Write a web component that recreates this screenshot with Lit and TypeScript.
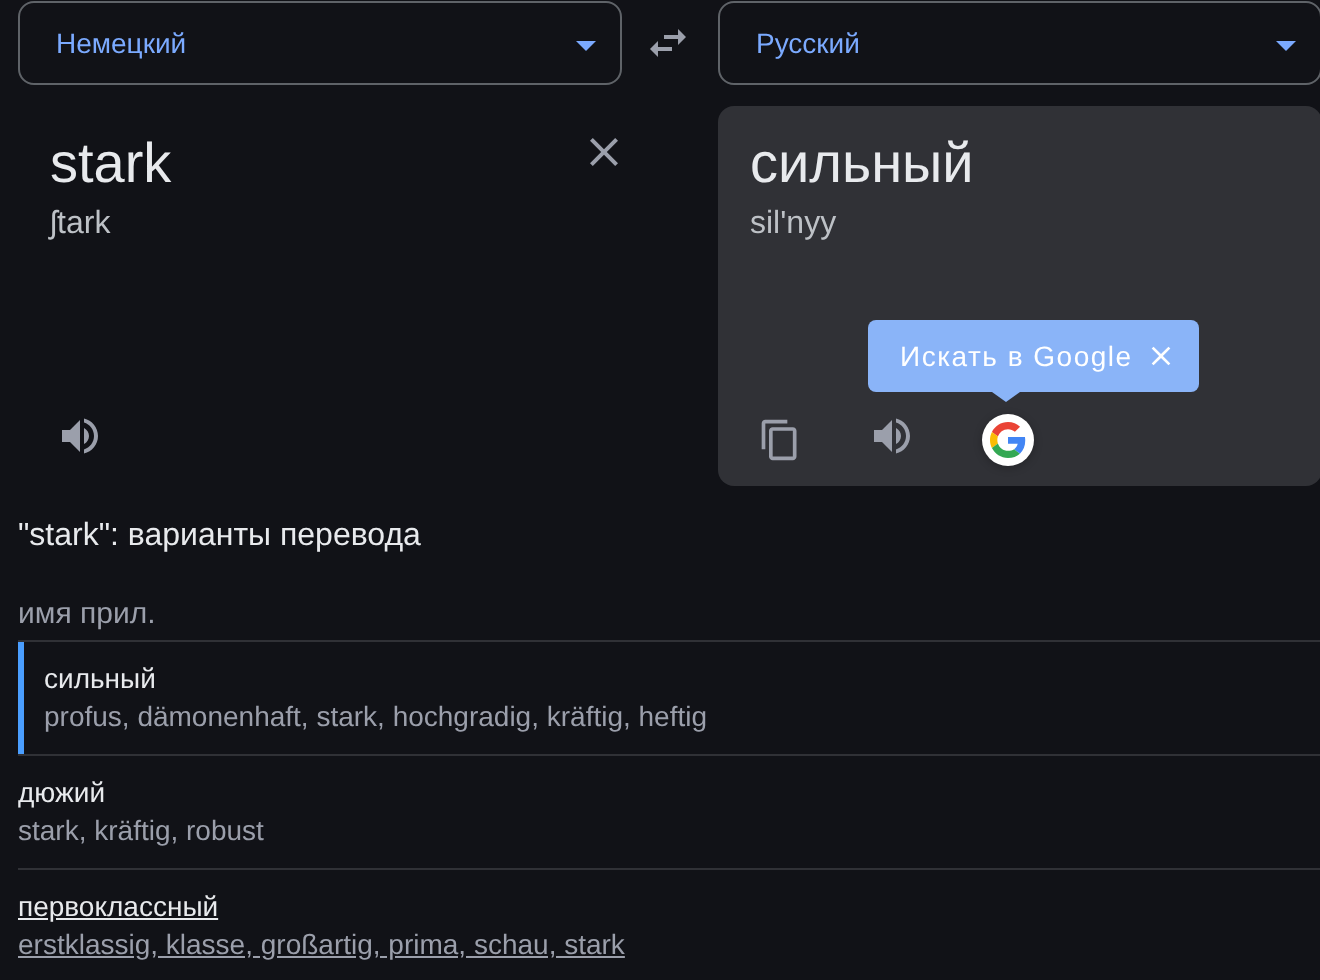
import { LitElement, html, css, svg } from "lit";
import { customElement } from "lit/decorators.js";

const ic = (d: string, cls: string) => html`<svg class=${cls} viewBox="0 0 24 24"><path d=${d}></path></svg>`;
const VOL = "M3 9v6h4l5 5V4L7 9H3zm13.5 3c0-1.77-1.02-3.29-2.5-4.03v8.05c1.48-.73 2.5-2.25 2.5-4.02zM14 3.23v2.06c2.89.86 5 3.54 5 6.71s-2.11 5.85-5 6.71v2.06c4.01-.91 7-4.49 7-8.77s-2.99-7.86-7-8.77z";
const CLOSE = "M19 6.41L17.59 5 12 10.59 6.41 5 5 6.41 10.59 12 5 17.59 6.41 19 12 13.41 17.59 19 19 17.59 13.41 12z";
const COPY = "M16 1H4c-1.1 0-2 .9-2 2v14h2V3h12V1zm3 4H8c-1.1 0-2 .9-2 2v14c0 1.1.9 2 2 2h11c1.1 0 2-.9 2-2V7c0-1.1-.9-2-2-2zm0 16H8V7h11v14z";
const SWAP = "M6.99 11L3 15l3.99 4v-3H14v-2H6.99v-3zM21 9l-3.99-4v3H10v2h7.01v3L21 9z";

@customElement("app-root")
export class AppRoot extends LitElement {
  static styles = css`
    :host { display: block; width: 1320px; height: 980px; overflow: hidden; background: #111217; font-family: "Liberation Sans", Arial, sans-serif; text-rendering: geometricPrecision; }
    .page { width: 1322px; padding: 1px 0 0 18px; box-sizing: border-box; will-change: transform; }
    .grid { display: grid; grid-template-columns: 604px 96px 604px; }
    .select { height: 84px; box-sizing: border-box; border: 2px solid #5f6368; border-radius: 16px; display: flex; align-items: center; justify-content: space-between; padding: 0 24px 0 36px; color: #7baaff; font-size: 28px; }
    .select span:first-child { padding-top: 2px; }
    .caret { width: 0; height: 0; border-left: 10px solid transparent; border-right: 10px solid transparent; border-top: 10px solid #7baaff; margin-top: 6px; }
    .swap { display: flex; align-items: center; justify-content: center; padding-right: 4px; }
    svg { display: block; fill: #9b9fab; flex: none; }
    .i48 { width: 48px; height: 48px; }
    .i44 { width: 44px; height: 44px; }
    .panels { margin-top: 21px; }
    .panel { height: 380px; box-sizing: border-box; position: relative; display: flex; flex-direction: column; justify-content: space-between; padding: 20px 0 20px 32px; border-radius: 16px; }
    .panel.right { grid-column: 3; background: #303136; }
    .top { display: flex; justify-content: space-between; align-items: flex-start; }
    .main { font-size: 56px; line-height: 72px; color: #e8eaed; padding-top: 1px; }
    .phon { font-size: 32px; line-height: 40px; margin-top: 3px; color: #bdc1c6; }
    .clear { margin: 2px -6px 0 0; }
    .tools { display: flex; align-items: flex-start; height: 55px; }
    .left-tools { margin-left: 6px; }
    .tools .vol { margin-top: 1px; }
    .copy { margin: 7px 0 0 8px; }
    .tools .vol2 { margin-left: 66px; }
    .g { width: 52px; height: 52px; margin: 3px 0 0 66px; border-radius: 50%; background: #fff; box-shadow: 0 2px 8px rgba(0,0,0,.25); display: flex; align-items: center; justify-content: center; }
    .g svg { width: 36px; height: 36px; }
    .tip { position: absolute; left: 150px; top: 214px; width: 331px; height: 72px; box-sizing: border-box; background: #8ab4f8; border-radius: 8px; display: flex; align-items: center; justify-content: space-between; padding: 0 22px 0 32px; color: #fff; font-size: 28px; letter-spacing: 1.5px; white-space: nowrap; }
    .tip span { padding-top: 2px; }
    .tip svg { fill: #fff; width: 32px; height: 32px; }
    .tip::after { content: ""; position: absolute; left: 124px; top: 72px; width: 0; height: 0; border-left: 14px solid transparent; border-right: 14px solid transparent; border-top: 10px solid #8ab4f8; }
    h2 { margin: 27px 0 0; font-weight: 400; font-size: 32px; line-height: 42px; color: #e8eaed; }
    .cat { margin-top: 39px; font-size: 30px; line-height: 40px; color: #9b9fab; padding-bottom: 6px; border-bottom: 2px solid #303136; }
    .row { height: 114px; box-sizing: border-box; padding-top: 18px; border-bottom: 2px solid #303136; font-size: 28px; line-height: 38px; }
    .row.sel { border-left: 6px solid #4a9eff; border-bottom-color: transparent; padding-left: 20px; position: relative; }
    .row.sel::after { content: ""; position: absolute; left: -6px; right: 0; bottom: -2px; height: 2px; background: #303136; }
    .w { color: #e8eaed; }
    .s { color: #9b9fab; }
    .u { text-decoration: underline; }
    .row.last { border-bottom: 0; }
  `;

  render() {
    return html`<div class="page">
      <div class="grid">
        <div class="select"><span>Немецкий</span><span class="caret"></span></div>
        <div class="swap">${ic(SWAP, "i48")}</div>
        <div class="select"><span>Русский</span><span class="caret"></span></div>
      </div>
      <div class="grid panels">
        <div class="panel">
          <div class="top">
            <div><div class="main">stark</div><div class="phon">ʃtark</div></div>
            <div class="clear">${ic(CLOSE, "i48")}</div>
          </div>
          <div class="tools left-tools">${ic(VOL, "i48 vol")}</div>
        </div>
        <div class="panel right">
          <div><div class="main">сильный</div><div class="phon">sil'nyy</div></div>
          <div class="tools">
            ${ic(COPY, "i44 copy")}
            ${ic(VOL, "i48 vol vol2")}
            <div class="g"><svg viewBox="0 0 48 48">${svg`
              <path fill="#EA4335" d="M24 9.5c3.54 0 6.71 1.22 9.21 3.6l6.85-6.85C35.9 2.38 30.47 0 24 0 14.62 0 6.51 5.38 2.56 13.22l7.98 6.19C12.43 13.72 17.74 9.5 24 9.5z"></path>
              <path fill="#4285F4" d="M46.98 24.55c0-1.57-.15-3.09-.38-4.55H24v9.02h12.94c-.58 2.96-2.26 5.48-4.78 7.18l7.73 6c4.51-4.18 7.09-10.36 7.09-17.65z"></path>
              <path fill="#FBBC05" d="M10.53 28.59c-.48-1.45-.76-2.99-.76-4.59s.27-3.14.76-4.59l-7.98-6.19C.92 16.46 0 20.12 0 24c0 3.88.92 7.54 2.56 10.78l7.97-6.19z"></path>
              <path fill="#34A853" d="M24 48c6.48 0 11.93-2.13 15.89-5.81l-7.73-6c-2.15 1.45-4.92 2.3-8.16 2.3-6.26 0-11.57-4.22-13.47-9.91l-7.98 6.19C6.51 42.62 14.62 48 24 48z"></path>`}
            </svg></div>
          </div>
          <div class="tip"><span>Искать в Google</span>${ic(CLOSE, "x")}</div>
        </div>
      </div>
      <h2>"stark": варианты перевода</h2>
      <div class="cat">имя прил.</div>
      <div class="row sel"><div class="w">сильный</div><div class="s">profus, dämonenhaft, stark, hochgradig, kräftig, heftig</div></div>
      <div class="row"><div class="w">дюжий</div><div class="s">stark, kräftig, robust</div></div>
      <div class="row last"><div class="w u">первоклассный</div><div class="s u">erstklassig, klasse, großartig, prima, schau, stark</div></div>
    </div>`;
  }
}
